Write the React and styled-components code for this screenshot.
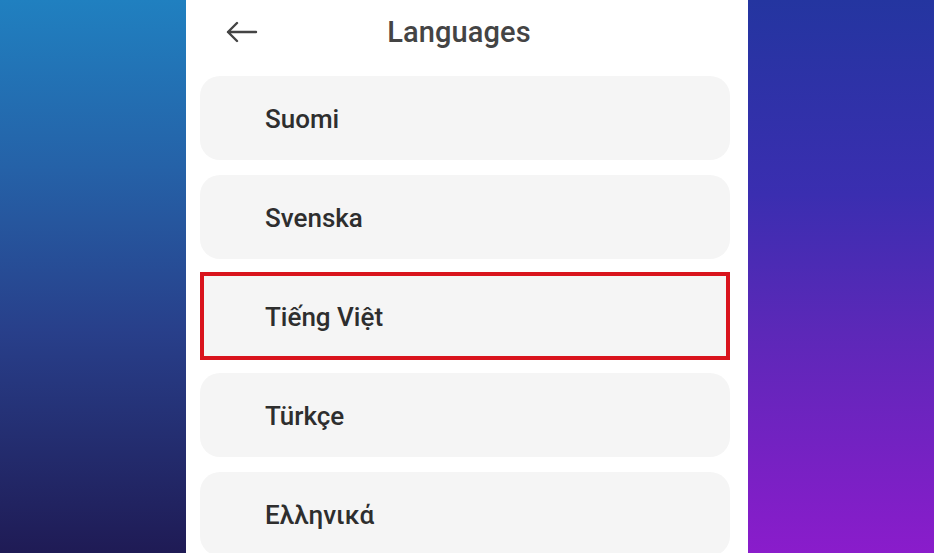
import React from 'react';
import styled, { createGlobalStyle } from 'styled-components';

const GlobalStyle = createGlobalStyle`
  html, body {
    margin: 0;
    padding: 0;
    height: 100%;
  }
  body {
    font-family: Roboto, "Noto Sans", "Liberation Sans", sans-serif;
    overflow: hidden;
  }
`;

const Stage = styled.div`
  display: flex;
  width: 934px;
  height: 553px;
  overflow: hidden;
`;

const SidePanel = styled.div`
  flex: ${(p) => (p.grow ? '1' : `0 0 ${p.width}px`)};
  background: ${(p) => p.bg};
`;

const Phone = styled.div`
  flex: 0 0 562px;
  background: #ffffff;
  display: flex;
  flex-direction: column;
  overflow: hidden;
`;

const Header = styled.div`
  flex: 0 0 64px;
  display: grid;
  grid-template-columns: 80px 1fr 96px;
  align-items: center;
  margin-bottom: 12px;
`;

const BackButton = styled.button`
  border: none;
  background: none;
  padding: 0 0 0 38px;
  display: flex;
  align-items: center;
  cursor: pointer;
`;

const Title = styled.h1`
  margin: 0;
  text-align: center;
  font-size: 29px;
  font-weight: 500;
  color: #444444;
  letter-spacing: 0.1px;
`;

const List = styled.div`
  flex: 0 0 auto;
  display: flex;
  flex-direction: column;
  gap: 15px;
  padding: 0 18px 0 14px;
`;

const Card = styled.div`
  flex: 0 0 auto;
  height: 84px;
  box-sizing: border-box;
  display: flex;
  align-items: center;
  padding-left: ${(p) => (p.selected ? 61 : 65)}px;
  background: #f5f5f5;
  border-radius: ${(p) => (p.selected ? 0 : 20)}px;
  border: ${(p) => (p.selected ? '4px solid #d9141d' : 'none')};
  ${(p) => p.selected && 'height: 88px; margin: -2px 0;'}
`;

const Label = styled.span`
  font-size: 26px;
  font-weight: 500;
  color: #2e2e2e;
  padding-top: 2px;
`;

const languages = [
  { name: 'Suomi' },
  { name: 'Svenska' },
  { name: 'Tiếng Việt', selected: true },
  { name: 'Türkçe' },
  { name: 'Ελληνικά' },
];

const BackArrow = () => (
  <svg width="34" height="24" viewBox="0 0 34 24" fill="none">
    <path
      d="M32 12H4M13 3L4 12l9 9"
      stroke="#444"
      strokeWidth="2.4"
      strokeLinecap="round"
      strokeLinejoin="round"
    />
  </svg>
);

export default function App() {
  return (
    <>
      <GlobalStyle />
      <Stage>
        <SidePanel
          width={186}
          bg="linear-gradient(180deg, #2080c0 0%, #2562a8 30%, #283f8a 60%, #1f1b55 100%)"
        />
        <Phone>
          <Header>
            <BackButton aria-label="Back">
              <BackArrow />
            </BackButton>
            <Title>Languages</Title>
            <span />
          </Header>
          <List>
            {languages.map((l) => (
              <Card key={l.name} selected={l.selected}>
                <Label>{l.name}</Label>
              </Card>
            ))}
          </List>
        </Phone>
        <SidePanel
          grow
          bg="linear-gradient(180deg, #2435a0 0%, #3a2eb0 35%, #5c28b8 60%, #8a1ccb 100%)"
        />
      </Stage>
    </>
  );
}
